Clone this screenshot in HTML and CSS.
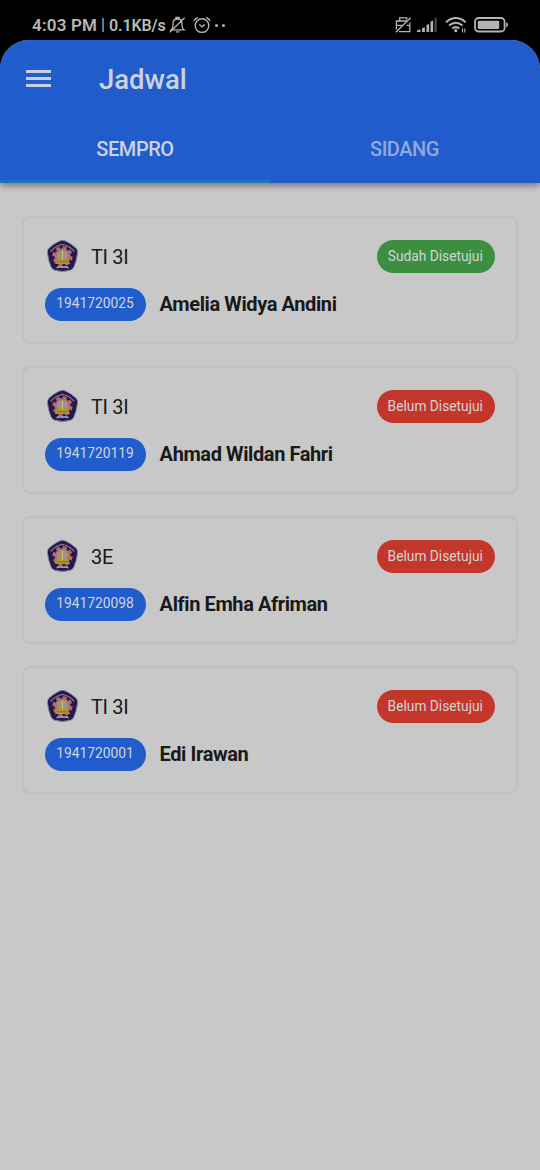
FILE: index.html
```html
<!DOCTYPE html>
<html lang="id">
<head>
<meta charset="utf-8">
<title>Jadwal</title>
<link rel="stylesheet" href="styles.css">
</head>
<body>
<svg class="defs" width="0" height="0" aria-hidden="true">
  <symbol id="crest" viewBox="0 0 32 34">
    <path d="M12.5 2.2Q16 .2 19.5 2.2Q25.5 5 29.7 9.3Q31.6 11.2 31 14.2Q30.3 21.5 27.6 27.6Q26.6 30.3 24 31.2Q16 33.8 8 31.2Q5.4 30.3 4.4 27.6Q1.7 21.5 1 14.2Q.4 11.2 2.3 9.3Q6.5 5 12.5 2.2Z" fill="#251750" stroke="#8d8994" stroke-width="1"/>
    <path d="M4.2 12.4Q9 7 16 5.4Q23 7 27.8 12.4" fill="none" stroke="#a49dba" stroke-width="1.2" stroke-dasharray="1.2 .4"/>
    <circle cx="16" cy="17.3" r="8.8" fill="none" stroke="#bb6c50" stroke-width="2.6" stroke-dasharray="3.9 3.01"/>
    <circle cx="16" cy="17.3" r="8" fill="#bd7256"/>
    <circle cx="16" cy="16.4" r="5.2" fill="#9291c0"/>
    <path d="M14.5 11.5h3l.8 8.5h3.7l1.4 5h-14.8l1.4-5h3.7z" fill="#ac982c"/>
    <path d="M15.5 12h1v8.5h-1z" fill="#d3ca70"/>
    <path d="M10 22.8h12" stroke="#6f6b25" stroke-width=".7"/>
    <path d="M9.6 29.6l1.2-2.4h10.4l1.2 2.4-2.6-.9h-7.6z" fill="#b9b3c2"/>
  </symbol>
</svg>
<div class="statusbar">
  <div class="status-left">
    <span class="clock">4:03 PM</span><span class="bar">|</span><span class="rate">0.1KB/s</span>
    <svg class="bell" width="17" height="18" viewBox="0 0 17 18" fill="none" stroke="#b4b4b4" stroke-width="1.3"><path d="M2.2 13.8Q4 12.3 4 9.5V7.5C4 4.7 5.8 3 8.5 3S13 4.7 13 7.5v2q0 2.8 2 4.3zM7 3V1.5h3V3M7 15.8h3.4M.8 16.2L15.6 1.8"/></svg>
    <svg class="alarm" width="18" height="18" viewBox="0 0 18 18" fill="none" stroke="#b4b4b4" stroke-width="1.4"><circle cx="9" cy="9.6" r="6.8"/><path d="M.9 5Q2.2 2.6 4.8 1.4M17.1 5Q15.8 2.6 13.2 1.4M6.3 8.5L9 10.9l2.8-2.4"/></svg>
    <i class="dot"></i><i class="dot"></i>
  </div>
  <div class="status-right">
    <svg width="17" height="18" viewBox="0 0 17 18" fill="none" stroke="#b4b4b4" stroke-width="1.3"><path d="M14.8 6.5V15.6H4M1.4 13.5V5H12M4.6 4.8V1.8h7.2v2M1.4 9.4h7M11.8 9.4H15M.8 16.2L15.7 1.8"/></svg>
    <svg class="signal" width="21" height="16" viewBox="0 0 21 16"><g fill="#b4b4b4"><path d="M0 13.4l3.5-1.2V15H0zM5 11.2l2.9-1V15H5zM9.5 8l2.6-1v8H9.5zM13.5 4.5l2.6-1V15h-2.6z"/></g><path d="M17.5 1.5l2.3-1V15h-2.3z" fill="#464646"/></svg>
    <svg class="wifi" width="23" height="18" viewBox="0 0 23 18" fill="none" stroke="#b4b4b4" stroke-width="2"><path d="M.9 6.2Q10.8 -2.2 20.7 6.2M4 9.6Q10.8 3.8 17.6 9.6M7.2 12.6Q10.8 9.6 14.4 12.6"/><circle cx="10.8" cy="14.7" r="1.6" fill="#b4b4b4" stroke="none"/><path d="M17.5 12.5v4M19.8 12.5v4" stroke-width="1.1"/></svg>
    <svg class="battery" width="35" height="16" viewBox="0 0 35 16"><rect x="1" y="1" width="29.6" height="13.5" rx="3.5" fill="none" stroke="#b4b4b4" stroke-width="1.8"/><rect x="3.8" y="3.7" width="21.4" height="8.2" rx="1" fill="#b4b4b4"/><path d="M32.2 5.5q1.8 0 1.8 2.3t-1.8 2.3z" fill="#b4b4b4"/></svg>
  </div>
</div>
<div class="app">
  <header class="appbar">
    <div class="toolbar">
      <svg class="menu" width="25" height="18" viewBox="0 0 25 18" fill="#c9cfdb"><path d="M0 0h25v3H0zM0 7h25v3H0zM0 14h25v3H0z"/></svg>
      <h1 class="title">Jadwal</h1>
    </div>
    <nav class="tabs">
      <div class="tab active"><span>SEMPRO</span></div>
      <div class="tab"><span>SIDANG</span></div>
    </nav>
  </header>
  <main class="list">
    <article class="card">
      <div class="row"><svg class="logo"><use href="#crest"/></svg><span class="kelas">TI 3I</span><span class="chip approved">Sudah Disetujui</span></div>
      <div class="row second"><span class="chip nim">1941720025</span><strong class="name">Amelia Widya Andini</strong></div>
    </article>
    <article class="card">
      <div class="row"><svg class="logo"><use href="#crest"/></svg><span class="kelas">TI 3I</span><span class="chip pending">Belum Disetujui</span></div>
      <div class="row second"><span class="chip nim">1941720119</span><strong class="name">Ahmad Wildan Fahri</strong></div>
    </article>
    <article class="card">
      <div class="row"><svg class="logo"><use href="#crest"/></svg><span class="kelas">3E</span><span class="chip pending">Belum Disetujui</span></div>
      <div class="row second"><span class="chip nim">1941720098</span><strong class="name">Alfin Emha Afriman</strong></div>
    </article>
    <article class="card">
      <div class="row"><svg class="logo"><use href="#crest"/></svg><span class="kelas">TI 3I</span><span class="chip pending">Belum Disetujui</span></div>
      <div class="row second"><span class="chip nim">1941720001</span><strong class="name">Edi Irawan</strong></div>
    </article>
  </main>
</div>
</body>
</html>
```
FILE: styles.css
```css
* { box-sizing: border-box; }
body { margin: 0; height: 1170px; overflow: hidden; background: #000; font-family: Roboto, sans-serif; color: #191919; display: flex; flex-direction: column; }
.defs { position: absolute; }
svg { display: block; flex: none; }
.statusbar { height: 40px; flex: none; display: flex; justify-content: space-between; padding: 16px 31px 0 32px; color: #b8b8b8; }
.status-left, .status-right { display: flex; height: 18px; align-items: center; }
.status-left { font-weight: 600; line-height: 18px; white-space: pre; }
.clock { font-size: 17px; letter-spacing: .2px; width: 66px; }
.bar { font-size: 16px; margin: 0 4px 0 3px; font-weight: 400; }
.rate { font-size: 16px; letter-spacing: -.1px; width: 57px; padding-top: 2px; }
.bell { margin-left: 3px; }
.alarm { margin-left: 7px; }
.dot { width: 3px; height: 3px; border-radius: 50%; background: #b4b4b4; margin-left: 4px; }
.signal { margin-left: 5px; }
.wifi { margin-left: 7px; }
.battery { margin-left: 6px; }
.app { flex: 1; background: #c8c8c8; border-radius: 29px 29px 0 0; }
.appbar { height: 143px; background: #215ccc; border-radius: 29px 29px 0 0; box-shadow: 0 3px 6px rgba(0,0,0,.38); display: flex; flex-direction: column; }
.toolbar { height: 77px; display: flex; align-items: center; padding-left: 26px; }
.title { margin: 3px 0 0 48px; font-size: 27.5px; line-height: 34px; font-weight: 500; color: #ccd2de; }
.tabs { flex: 1; display: grid; grid-template-columns: 1fr 1fr; }
.tab { display: flex; align-items: center; justify-content: center; font-size: 20px; letter-spacing: -.45px; font-weight: 500; color: #91a9dc; border-bottom: 3px solid transparent; padding-right: 1px; }
.tab.active { color: #ccd2de; border-bottom-color: #1c74bd; padding-right: 0; }
.list { padding: 33px 22px; display: flex; flex-direction: column; gap: 22px; }
.card { height: 128px; border: 2px solid #c0c0c0; border-radius: 8px; padding: 22px 21px; }
.row { height: 33px; display: flex; align-items: center; }
.second { margin-top: 14.5px; }
.logo { width: 33px; height: 34px; margin: -2px 0 0 1px; }
.kelas { font-size: 20px; letter-spacing: -.35px; margin-left: 12px; }
.chip { height: 33px; border-radius: 17px; font-size: 13.75px; line-height: 32px; text-align: center; white-space: nowrap; color: #d3d4d6; }
.approved, .pending { width: 118.5px; margin-left: auto; padding-right: 1px; }
.approved { background: #3d8f40; }
.pending { background: #c3372b; }
.nim { width: 101px; background: #215ccc; line-height: 31px; padding-right: 1px; }
.name { font-size: 20px; letter-spacing: -.4px; font-weight: 700; margin-left: 13.6px; }
```
